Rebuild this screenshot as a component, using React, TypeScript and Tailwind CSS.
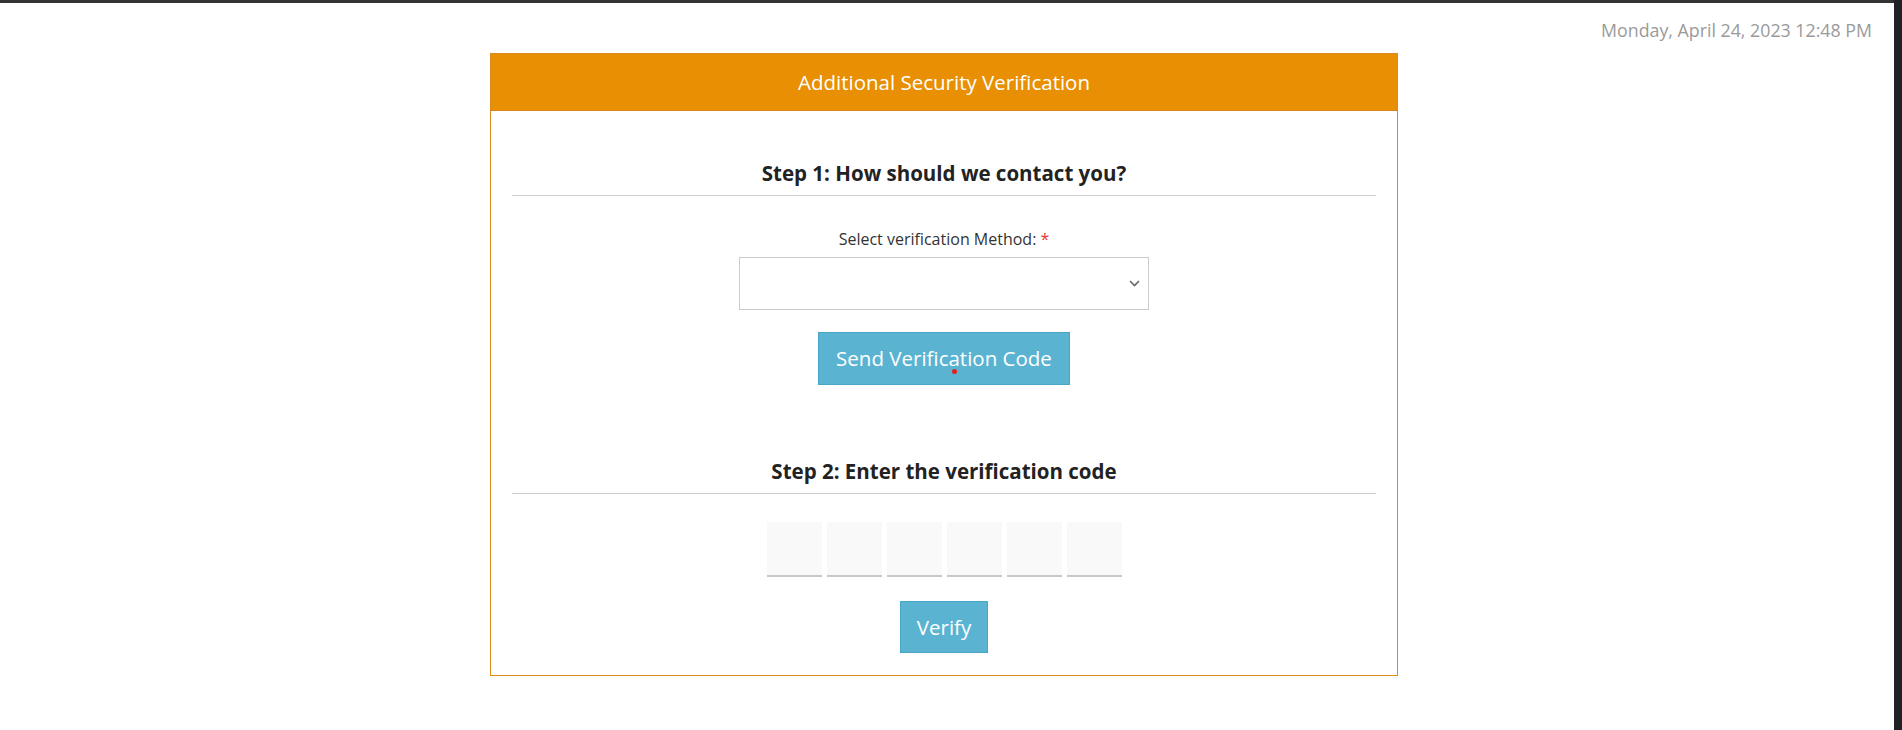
import { useState } from "react";

const font = { fontFamily: '"Open Sans", "Liberation Sans", sans-serif' };

export default function App() {
    const [code, setCode] = useState(["", "", "", "", "", ""]);
    const [method, setMethod] = useState("");

    const setDigit = (i: number, v: string) => {
        const next = [...code];
        next[i] = v.slice(-1);
        setCode(next);
    };

    return <div className="h-[730px] w-full flex bg-white" style={font}>
        <div className="flex-1 flex flex-col">
            <div className="h-[3px] bg-[#333333]" />
            <div className="h-[50px] flex justify-end items-center pr-[22px] pt-[4px]">
                <span className="text-[17.8px] text-[#9a9a9a]">Monday, April 24, 2023 12:48 PM</span>
            </div>

            <div className="ml-[490px] w-[908px] border border-[#dc8a1e] flex flex-col">
                <div className="h-[57px] bg-[#e88f03] border-b border-[#d9861a] flex justify-center items-center">
                    <h1 className="text-white text-[20.5px] leading-[28px]">Additional Security Verification</h1>
                </div>

                <div className="px-[21px] flex flex-col items-center">
                    <h2 className="mt-[49px] text-[20.5px] leading-[27px] font-bold text-[#222222]">Step 1: How should we contact you?</h2>
                    <div className="w-full h-px bg-[#cfcfcf] mt-[8px]" />

                    <label className="mt-[33px] text-[16px] leading-[21px] text-[#333333]">Select verification Method: <span className="text-[#e53935]">*</span></label>
                    <div className="relative mt-[7px] w-[410px] h-[53px]">
                        <select value={method} onChange={e => setMethod(e.target.value)} className="appearance-none w-full h-full border border-[#cccccc] bg-white px-3 text-[16px] outline-none">
                            <option value=""></option>
                            <option value="sms">Text message</option>
                            <option value="email">Email</option>
                        </select>
                        <svg className="absolute right-[9px] top-[23px] pointer-events-none" width="11" height="7" viewBox="0 0 11 7">
                            <path d="M1 1l4.5 4.5L10 1" fill="none" stroke="#666666" strokeWidth="1.6" />
                        </svg>
                    </div>

                    <button className="relative mt-[22px] w-[252px] h-[53px] bg-[#5bb3d2] border border-[#4aa6c6] text-white text-[20.5px]">
                        Send Verification Code
                        <span className="absolute left-[133px] top-[36px] w-[5px] h-[5px] rounded-full bg-[#e0201b]" />
                    </button>

                    <h2 className="mt-[73px] text-[20.5px] leading-[27px] font-bold text-[#222222]">Step 2: Enter the verification code</h2>
                    <div className="w-full h-px bg-[#cfcfcf] mt-[8px]" />

                    <div className="mt-[28px] flex gap-[5px]">
                        {code.map((d, i) =>
                            <input key={i} value={d} onChange={e => setDigit(i, e.target.value)} maxLength={1}
                                className="w-[55px] h-[55px] bg-[#f9f9f9] border-b-2 border-[#c8c8c8] text-center text-[20px] outline-none" />
                        )}
                    </div>

                    <button className="mt-[24px] mb-[22px] w-[88px] h-[52px] bg-[#5bb3d2] border border-[#4aa6c6] text-white text-[20.5px]">Verify</button>
                </div>
            </div>
        </div>
        <div className="w-[8px] h-full bg-[#202124]" />
    </div>
}
